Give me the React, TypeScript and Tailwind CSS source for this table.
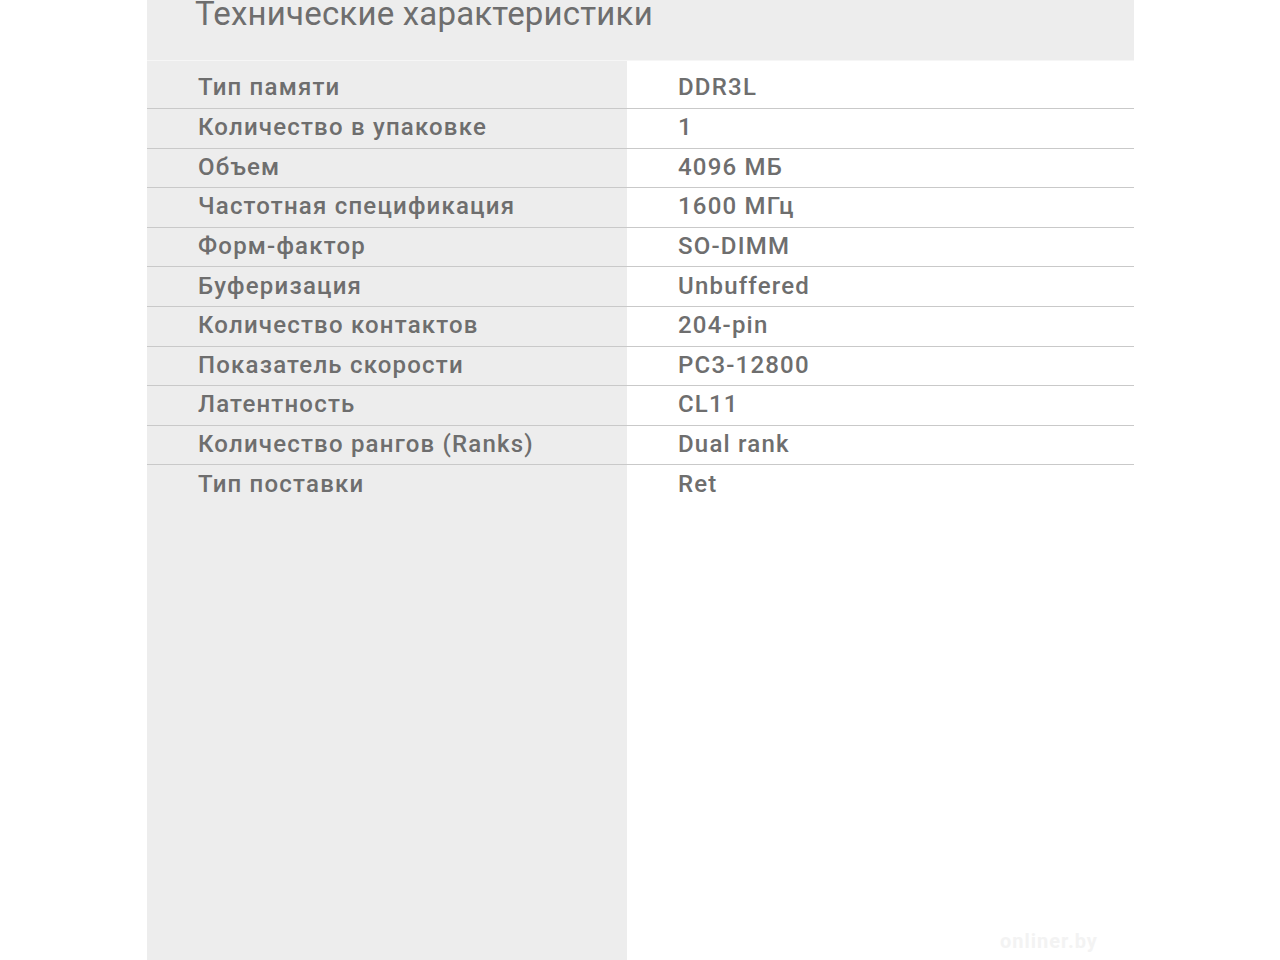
const specs: [string, string][] = [
  ["Тип памяти", "DDR3L"],
  ["Количество в упаковке", "1"],
  ["Объем", "4096 МБ"],
  ["Частотная спецификация", "1600 МГц"],
  ["Форм-фактор", "SO-DIMM"],
  ["Буферизация", "Unbuffered"],
  ["Количество контактов", "204-pin"],
  ["Показатель скорости", "PC3-12800"],
  ["Латентность", "CL11"],
  ["Количество рангов (Ranks)", "Dual rank"],
  ["Тип поставки", "Ret"],
];

export default function App() {
  return (
    <div
      className="relative h-[960px] w-full overflow-hidden bg-white text-[#6e6e6e]"
      style={{ fontFamily: "Roboto, 'Noto Sans', sans-serif" }}
    >
      <div className="ml-[147px] flex h-full w-[987px] flex-col">
        <div className="h-[61px] shrink-0 bg-[#ededed] border-b border-[#f6f6f6]">
          <h2 className="ml-[48px] mt-[-5px] text-[33px] leading-[38px] tracking-[0.2px]">
            Технические характеристики
          </h2>
        </div>
        <div className="flex flex-1 flex-col">
          {specs.map(([label, value], i) => {
            const first = i === 0;
            const last = i === specs.length - 1;
            return (
              <div
                key={label}
                className={
                  (first ? "h-[48px] " : "h-[39.6px] ") +
                  (last ? "flex shrink-0" : "flex shrink-0 border-b border-[#c9c9c9]")
                }
              >
                <div
                  className={
                    (first ? "pt-[6px] " : "") +
                    "flex w-[480px] items-center bg-[#ededed] pb-[2px] pl-[51px] text-[24px] font-medium tracking-[1.2px]"
                  }
                >
                  {label}
                </div>
                <div
                  className={
                    (first ? "pt-[6px] " : "") +
                    "flex flex-1 items-center pb-[2px] pl-[51px] text-[24px] font-medium tracking-[1.2px]"
                  }
                >
                  {value}
                </div>
              </div>
            );
          })}
          <div className="flex flex-1">
            <div className="w-[480px] bg-[#ededed]" />
            <div className="flex-1" />
          </div>
        </div>
      </div>
      <div className="absolute left-[1000px] top-[926px] text-[20px] font-bold tracking-[1px] text-[#f3f3f3]">
        onliner.by
      </div>
    </div>
  );
}
